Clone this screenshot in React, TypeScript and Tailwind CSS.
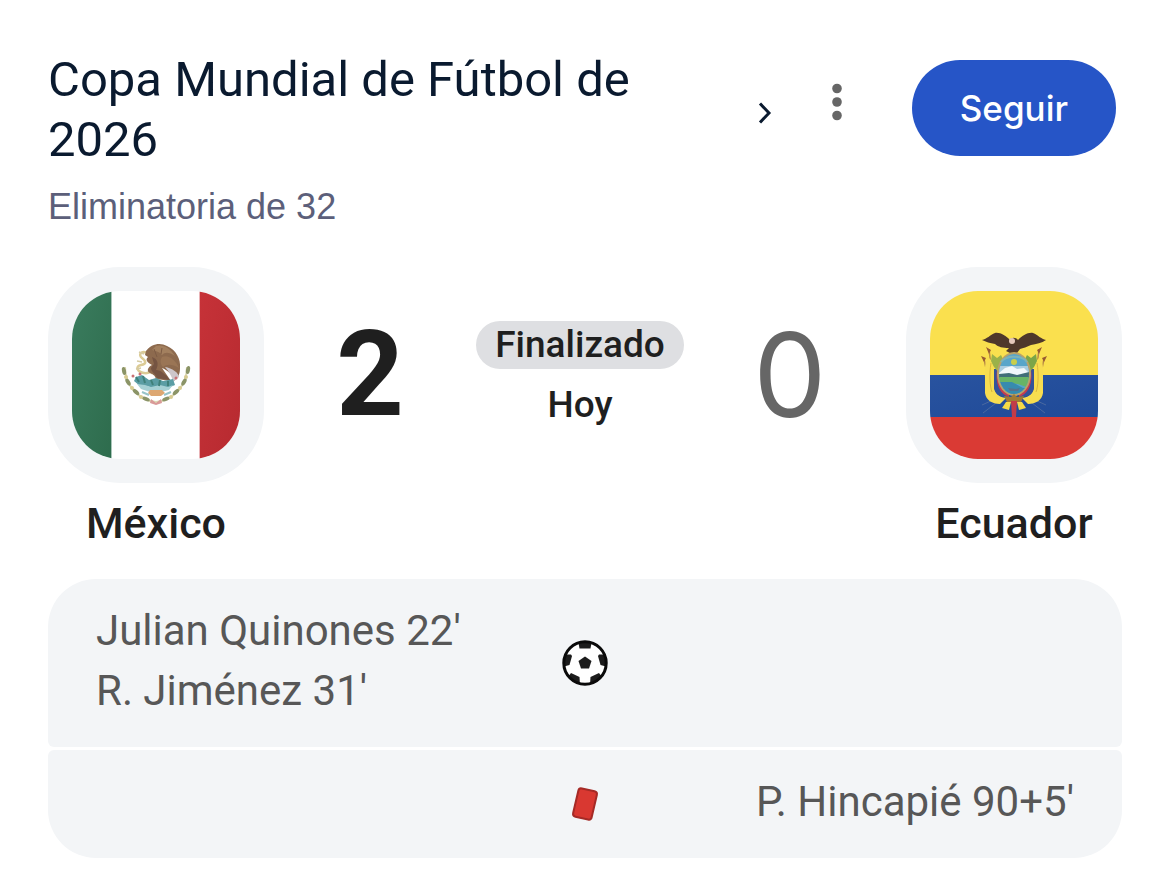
import type { ReactNode } from 'react'

const goals = ["Julian Quinones 22'", "R. Jiménez 31'"]
const redCards = ["P. Hincapié 90+5'"]

function MexicoFlag() {
  return (
    <svg viewBox="0 0 168 168" className="size-full" role="img" aria-label="Bandera de México">
      <defs>
        <linearGradient id="mxGreen" x1="0" y1="0" x2="1" y2="1">
          <stop offset="0" stopColor="#3a7c5e" />
          <stop offset="1" stopColor="#2e6c4d" />
        </linearGradient>
        <linearGradient id="mxRed" x1="0" y1="0" x2="1" y2="1">
          <stop offset="0" stopColor="#c63238" />
          <stop offset="1" stopColor="#b72a30" />
        </linearGradient>
      </defs>
      <rect width="168" height="168" fill="#fff" />
      <rect width="39" height="168" fill="url(#mxGreen)" />
      <rect x="39" width="1" height="168" fill="#a9c6b9" />
      <rect x="128" width="40" height="168" fill="url(#mxRed)" />
      <rect x="127" width="1" height="168" fill="#e9b3b6" />

      {/* laurel and oak */}
      <path d="M53 76C53 94 66 109 84 111C102 109 115 94 115 76" fill="none" stroke="#dcd8b4" strokeWidth="2" />
      <g fill="#8b9467">
        <ellipse cx="52" cy="80" rx="2" ry="4" transform="rotate(-12 52 80)" />
        <ellipse cx="56" cy="91" rx="2" ry="4" transform="rotate(-30 56 91)" />
        <ellipse cx="64" cy="101" rx="2" ry="4" transform="rotate(-48 64 101)" />
        <ellipse cx="74" cy="108" rx="2" ry="4" transform="rotate(-68 74 108)" />
        <ellipse cx="116" cy="79" rx="2" ry="4" transform="rotate(12 116 79)" />
        <ellipse cx="112" cy="91" rx="2" ry="4" transform="rotate(30 112 91)" />
        <ellipse cx="104" cy="101" rx="2" ry="4" transform="rotate(48 104 101)" />
        <ellipse cx="94" cy="108" rx="2" ry="4" transform="rotate(68 94 108)" />
      </g>
      <g fill="#d8cc92">
        <circle cx="54" cy="86" r="2" />
        <circle cx="60" cy="97" r="2" />
        <circle cx="69" cy="106" r="2" />
        <circle cx="114" cy="86" r="2" />
        <circle cx="108" cy="97" r="2" />
        <circle cx="99" cy="106" r="2" />
      </g>
      <path d="M79 108l5 4 5-4 1 4-6 2-6-2z" fill="#d99a98" />

      {/* snake */}
      <path
        d="M75 62C69 59 66 64 70 67S75 73 69 74 65 81 72 82S78 79 80 82"
        fill="none"
        stroke="#dccb95"
        strokeWidth="2.5"
        strokeLinecap="round"
      />
      <path d="M67 61l5 2M65 70l5 1M64 78l5-1" stroke="#d5cba4" strokeWidth="1.5" />

      {/* eagle */}
      <path
        d="M74 60C79 53 88 51 95 55C104 59 109 68 108 77C108 83 106 87 102 90C101 83 95 79 90 77L99 90L84 88C83 84 80 83 78 82C74 80 76 76 80 74C75 71 73 69 76 66L73 64Z"
        fill="#8d6a4e"
      />
      <path d="M84 55C91 53 98 57 103 65C97 61 93 61 90 64C87 60 83 60 80 59Z" fill="#a3805f" />
      <path d="M90 66C96 63 104 69 107 77C100 73 95 73 91 76C88 73 88 69 90 66Z" fill="#9a7555" />
      <path d="M80 66C86 68 87 73 84 79C89 79 94 84 98 89L85 87C83 82 79 81 79 77L82 73Z" fill="#755442" />
      <path d="M82 58l3 8M90 57l-1 6" stroke="#7d5c45" strokeWidth="1" />
      <path d="M93 76C100 77 107 82 107 86L101 91C100 85 97 81 93 76Z" fill="#cdc6ca" />

      {/* nopal, stone and water */}
      <path d="M64 86L70 84L77 89L84 87L91 90L101 88L103 94L96 97L89 95L83 98L75 95L68 95L62 90Z" fill="#5b9da4" />
      <path d="M65 93l8 1 6 2 9-2 8 2 5-2-4 5-8 2-11 0-9-3z" fill="#a6d0d4" />
      <path d="M64 86l3 5M71 85l2 7M79 89l2 5M88 89l-1 6M96 90l0 5" stroke="#3f807a" strokeWidth="2" />
      <circle cx="61" cy="85" r="1.5" fill="#c97073" />
      <circle cx="68" cy="83" r="1.5" fill="#c97073" />
      <circle cx="104" cy="87" r="1.5" fill="#c97073" />
      <path d="M78 99l12 0 3 3-4 3-10 0-3-3z" fill="#dda772" />
      <path d="M70 101l7 3M92 104l7-3" stroke="#98c4c8" strokeWidth="2" />
    </svg>
  )
}

function EcuadorFlag() {
  return (
    <svg viewBox="0 0 168 168" className="size-full" role="img" aria-label="Bandera de Ecuador">
      <defs>
        <linearGradient id="ecBlue" x1="0" y1="0" x2="1" y2="1">
          <stop offset="0" stopColor="#29539f" />
          <stop offset="1" stopColor="#1f4a98" />
        </linearGradient>
      </defs>
      <rect width="168" height="84" fill="#fae04e" />
      <rect y="84" width="168" height="42" fill="url(#ecBlue)" />
      <rect y="126" width="168" height="42" fill="#da3a34" />

      {/* lances behind the drapes */}
      <path d="M66 112l-13 10M63 109l-11 5M102 112l13 10M105 109l11 5" stroke="#4a69a0" strokeWidth="1" />
      <path d="M59 58l3 26M109 58l-3 26M54 68l3 14M114 68l-3 14" stroke="#b98a45" strokeWidth="1.5" />
      <path d="M56 56l5 3-2 4zM112 56l-5 3 2 4zM51 65l5 2-2 4zM117 65l-5 2 2 4z" fill="#985b32" />

      {/* side flags */}
      <path d="M58 66C54 73 55 80 55 87L55 102C56 109 62 113 70 113L76 107C68 106 64 102 64 94L64 72Z" fill="#f7dd50" />
      <path d="M110 66C114 73 113 80 113 87L113 102C112 109 106 113 98 113L92 107C100 106 104 102 104 94L104 72Z" fill="#f7dd50" />
      <path d="M61 72C59 84 60 96 62 101M107 72C109 84 108 96 106 101" fill="none" stroke="#d8b53e" strokeWidth="1" />
      <path d="M64 78L64 97C65 103 70 106 77 106L75 98L69 78Z" fill="#33539a" />
      <path d="M104 78L104 97C103 103 98 106 91 106L93 98L99 78Z" fill="#33539a" />
      <path d="M67 79C65 91 69 103 79 106L79 99L71 78ZM101 79C103 91 99 103 89 106L89 99L97 78Z" fill="#c63c4e" />

      {/* laurel */}
      <path d="M62 63l5 4 4-3 3 6-5 12-5-6-3-6z" fill="#9bb149" />
      <path d="M106 63l-5 4-4-3-3 6 5 12 5-6 3-6z" fill="#7ba548" />

      {/* condor */}
      <path
        d="M52 49C57 48 60 44 65 42C70 41 76 45 80 49C81 46 86 46 88 49C92 45 98 41 103 42C108 44 111 48 116 49C112 52 106 53 101 54C97 56 93 57 90 58L87 62L80 62L76 60L79 57C73 57 68 56 65 53C60 52 56 51 52 49Z"
        fill="#4f382b"
      />
      <circle cx="82" cy="50" r="3" fill="#e5c8bb" />

      {/* shield */}
      <ellipse cx="84" cy="83" rx="17" ry="22" fill="#b9a269" />
      <clipPath id="ecShield">
        <ellipse cx="84" cy="83" rx="15" ry="20" />
      </clipPath>
      <g clipPath="url(#ecShield)">
        <rect x="68" y="62" width="32" height="44" fill="#58a5ca" />
        <path d="M69 75h30v9H69z" fill="#a9cce0" />
        <path d="M69 82L75 77L82 75L87 78L94 77L99 82L99 85L69 85Z" fill="#f1f7fb" />
        <path d="M69 83L79 82L87 84L99 81V87H69Z" fill="#416e78" />
        <path d="M69 86H99V97L88 93L69 91Z" fill="#68b466" />
        <path d="M69 91L82 91L93 97L100 97V106H68Z" fill="#378bae" />
        <path d="M78 97l8 1 4-1-2 3-8 0z" fill="#59718b" />
      </g>
      <path d="M71 71C76 64 92 64 97 71" fill="none" stroke="#7cb3b8" strokeWidth="2" />
      <circle cx="84" cy="71" r="3" fill="#c8ce4c" />

      {/* fasces and knot */}
      <path d="M74 105L81 106L84 103L87 106L94 105L91 111L84 112L77 111Z" fill="#a07a35" />
      <path d="M76 111l5 0-2 8-7-2zM92 111l-5 0 2 8 7-2z" fill="#f4d947" />
      <path d="M81 110h6l-1 16h-4z" fill="#c33b47" />
    </svg>
  )
}

function SoccerBall() {
  return (
    <svg viewBox="0 0 46 46" className="size-[46px]" role="img" aria-label="Goles">
      <clipPath id="ball">
        <circle cx="23" cy="23" r="22" />
      </clipPath>
      <circle cx="23" cy="23" r="22" fill="#fff" />
      <g clipPath="url(#ball)" fill="#1c1c1c">
        <path d="M23 16.5L29.5 21L27 28.5H19L16.5 21Z" />
        <path d="M16 0H30L28.5 8.5H17.5Z" />
        <path d="M0 14.5L9 14.5L10 16L7.5 25L0 27Z" />
        <path d="M46 14.5L37 14.5L36 16L38.5 25L46 27Z" />
        <path d="M6 37L9 33L17.5 37L18 46H10Z" />
        <path d="M40 37L37 33L28.5 37L28 46H36Z" />
      </g>
      <circle cx="23" cy="23" r="21.2" fill="none" stroke="#0a0a0a" strokeWidth="3" />
    </svg>
  )
}

function RedCard() {
  return (
    <svg viewBox="0 0 46 46" className="size-[46px]" role="img" aria-label="Tarjetas rojas">
      <rect
        x="13.5"
        y="8.5"
        width="19"
        height="29"
        rx="3"
        fill="#d93831"
        stroke="#a52a26"
        strokeWidth="2"
        transform="rotate(13 23 23)"
      />
    </svg>
  )
}

function Team({ name, flag }: { name: string; flag: ReactNode }) {
  return (
    <div className="flex w-[216px] shrink-0 flex-col items-center">
      <div className="size-[216px] rounded-[72px] bg-[#f3f5f7] p-6">
        <div className="size-full overflow-hidden rounded-[48px]">{flag}</div>
      </div>
      <h2 className="mt-3 text-[43px] leading-[56px] font-medium text-[#1f1f1f]">{name}</h2>
    </div>
  )
}

type EventRowProps = {
  icon: ReactNode
  home?: string[]
  away?: string[]
  className: string
}

function EventRow({ icon, home = [], away = [], className }: EventRowProps) {
  return (
    <div className={`grid grid-cols-[1fr_46px_1fr] items-center bg-[#f3f5f7] px-12 py-[22px] ${className}`}>
      <ul className="pb-1">
        {home.map((item) => (
          <li key={item}>{item}</li>
        ))}
      </ul>
      {icon}
      <ul className="pb-1 text-right">
        {away.map((item) => (
          <li key={item}>{item}</li>
        ))}
      </ul>
    </div>
  )
}

export default function App() {
  return (
    <main className="min-h-screen bg-white px-12 pt-12 pb-[22px] font-['Roboto','Liberation_Sans',sans-serif]">
      <header className="flex items-start pr-1.5">
        <a href="#torneo" className="flex-1 pt-0.5">
          <h1 className="max-w-[620px] text-[49px] leading-[60px] text-[#0a1a2f]">Copa Mundial de Fútbol de 2026</h1>
          <p className="mt-3 font-['Liberation_Sans',sans-serif] text-4xl leading-[50px] text-[#5c5f7a]">
            Eliminatoria de 32
          </p>
        </a>
        <a href="#torneo" aria-label="Ver torneo" className="mt-[53px] mr-[58px]">
          <svg viewBox="0 0 16 24" className="h-6 w-4" fill="none" stroke="#0a1a2f" strokeWidth="3">
            <path d="M3 2.5L12 12L3 21.5" />
          </svg>
        </a>
        <button type="button" aria-label="Más opciones" className="mt-8 mr-[69px]">
          <svg viewBox="0 0 12 44" className="h-11 w-3" fill="#666">
            <circle cx="6" cy="8.5" r="4.8" />
            <circle cx="6" cy="22" r="4.8" />
            <circle cx="6" cy="35.5" r="4.8" />
          </svg>
        </button>
        <button
          type="button"
          className="mt-3 h-24 rounded-full bg-[#2655c7] px-12 font-['Inter','Liberation_Sans',sans-serif] text-[35px] font-medium text-white"
        >
          Seguir
        </button>
      </header>

      <section className="mt-[35px] flex items-start">
        <Team name="México" flag={<MexicoFlag />} />
        <div className="grid flex-1 grid-cols-[1fr_auto_1fr] pr-2.5 text-center">
          <span className="mt-12 text-[118px] leading-[120px] font-bold text-[#1f1f1f]">2</span>
          <div className="mt-[54px] text-[37px] font-medium text-[#1f1f1f]">
            <p className="rounded-full bg-[#dedfe2] px-[19px] leading-[48px]">Finalizado</p>
            <p className="mt-3 leading-[48px]">Hoy</p>
          </div>
          <span className="mt-12 font-['Inter','Liberation_Sans',sans-serif] text-[116px] leading-[120px] text-[#666]">
            0
          </span>
        </div>
        <Team name="Ecuador" flag={<EcuadorFlag />} />
      </section>

      <section className="mt-7 flex flex-col gap-[3px] text-[42px] leading-[60px] text-[#575757]">
        <EventRow icon={<SoccerBall />} home={goals} className="rounded-t-[48px] rounded-b-md" />
        <EventRow icon={<RedCard />} away={redCards} className="rounded-t-md rounded-b-[48px]" />
      </section>
    </main>
  )
}
